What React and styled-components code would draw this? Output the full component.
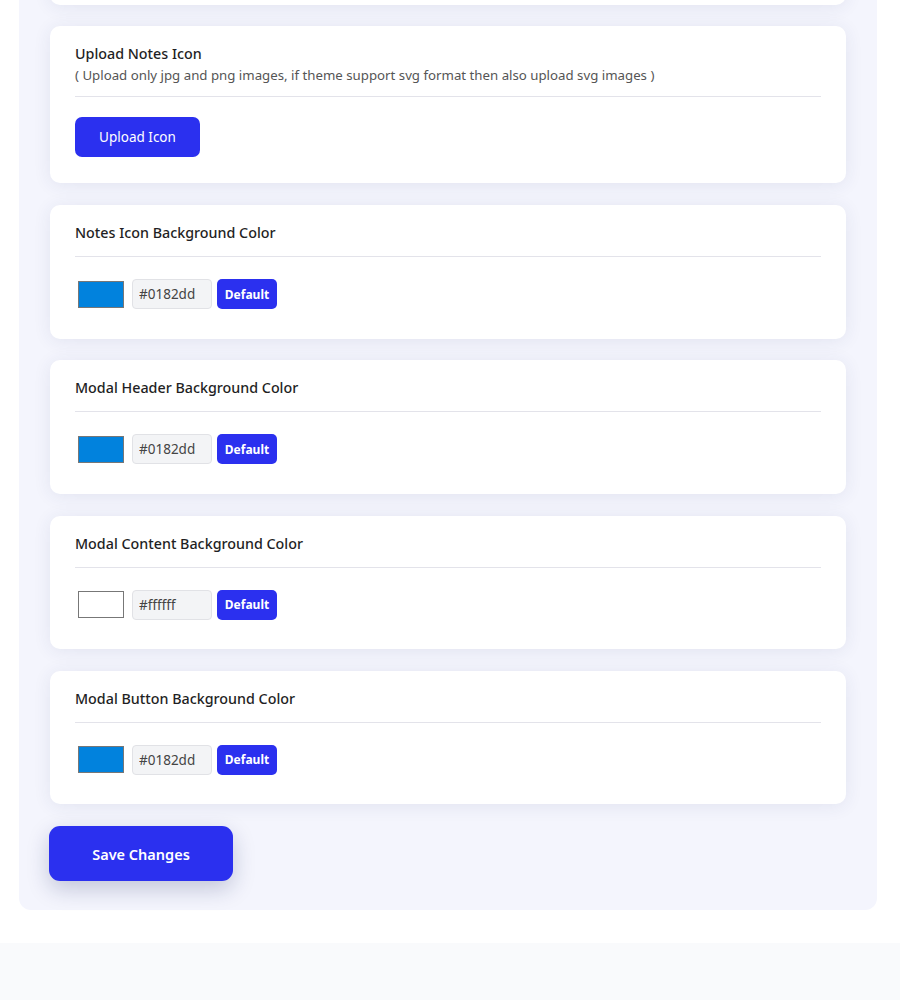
import styled, { createGlobalStyle } from "styled-components";

const GlobalStyle = createGlobalStyle`
  body {
    margin: 0;
    background: #fff;
    font-family: "Noto Sans", "Open Sans", Arial, sans-serif;
    color: #222;
  }
`;

const Page = styled.div`
  padding: 0 23px 0 19px;
  margin-top: -159px;
`;

const Panel = styled.div`
  background: #f4f5fd;
  border-radius: 12px;
  padding: 30px 31px 29px 30px;
  display: flex;
  flex-direction: column;
  gap: 21.75px;
`;

const Card = styled.div`
  background: #fff;
  border-radius: 10px;
  padding: 17px 25px ${(p) => (p.$tight ? "26px" : "29.5px")};
  box-shadow: 0 2px 18px rgba(40, 50, 110, 0.09);
  margin-left: 1px;
`;

const Header = styled.div`
  border-bottom: 1px solid #e3e3ea;
  padding-bottom: ${(p) => (p.$sub ? "10px" : "12px")};
  margin-bottom: ${(p) => (p.$sub ? "20px" : "22px")};
`;

const Title = styled.div`
  font-size: 14.3px;
  font-weight: 500;
  line-height: 22px;
  color: #1f1f24;
`;

const Sub = styled.div`
  font-size: 13.25px;
  line-height: 21px;
  color: #555;
`;

const Button = styled.button`
  border: none;
  background: #2b30ef;
  color: #fff;
  font-family: inherit;
  cursor: pointer;
`;

const UploadButton = styled(Button)`
  width: 125px;
  height: 40px;
  border-radius: 7px;
  font-size: 13.5px;
`;

const ColorRow = styled.div`
  display: flex;
  align-items: center;
  gap: 5px;
  height: 30px;
`;

const Swatch = styled.div`
  width: 44px;
  height: 25px;
  margin: 0 3px 0 3px;
  background: ${(p) => p.$color};
  border: 1px solid #777;
`;

const HexInput = styled.input`
  box-sizing: border-box;
  width: 80px;
  height: 30px;
  background: #f3f4f6;
  border: 1px solid #e1e2e6;
  border-radius: 4px;
  padding: 0 6px;
  font-family: inherit;
  font-size: 13.5px;
  color: #444;
  outline: none;
`;

const DefaultButton = styled(Button)`
  width: 60px;
  height: 30px;
  border-radius: 5px;
  font-size: 12px;
  font-weight: 700;
`;

const SaveButton = styled(Button)`
  align-self: flex-start;
  width: 184px;
  height: 55px;
  border-radius: 11px;
  font-size: 14.5px;
  font-weight: 600;
  box-shadow: 0 8px 22px rgba(20, 30, 90, 0.22);
`;

const Footer = styled.div`
  margin-top: 33px;
  height: 120px;
  background: #f9fafc;
`;

const colorFields = [
  { label: "Notes Icon Color", value: "#ffffff" },
  { label: "Notes Icon Background Color", value: "#0182dd" },
  { label: "Modal Header Background Color", value: "#0182dd" },
  { label: "Modal Content Background Color", value: "#ffffff" },
  { label: "Modal Button Background Color", value: "#0182dd" },
];

function ColorCard({ label, value }) {
  return (
    <Card>
      <Header>
        <Title>{label}</Title>
      </Header>
      <ColorRow>
        <Swatch $color={value} />
        <HexInput defaultValue={value} />
        <DefaultButton>Default</DefaultButton>
      </ColorRow>
    </Card>
  );
}

export default function App() {
  return (
    <>
      <GlobalStyle />
      <Page>
        <Panel>
          <ColorCard {...colorFields[0]} />
          <Card $tight>
            <Header $sub>
              <Title>Upload Notes Icon</Title>
              <Sub>( Upload only jpg and png images, if theme support svg format then also upload svg images )</Sub>
            </Header>
            <UploadButton>Upload Icon</UploadButton>
          </Card>
          {colorFields.slice(1).map((f) => (
            <ColorCard key={f.label} {...f} />
          ))}
          <SaveButton>Save Changes</SaveButton>
        </Panel>
      </Page>
      <Footer />
    </>
  );
}
